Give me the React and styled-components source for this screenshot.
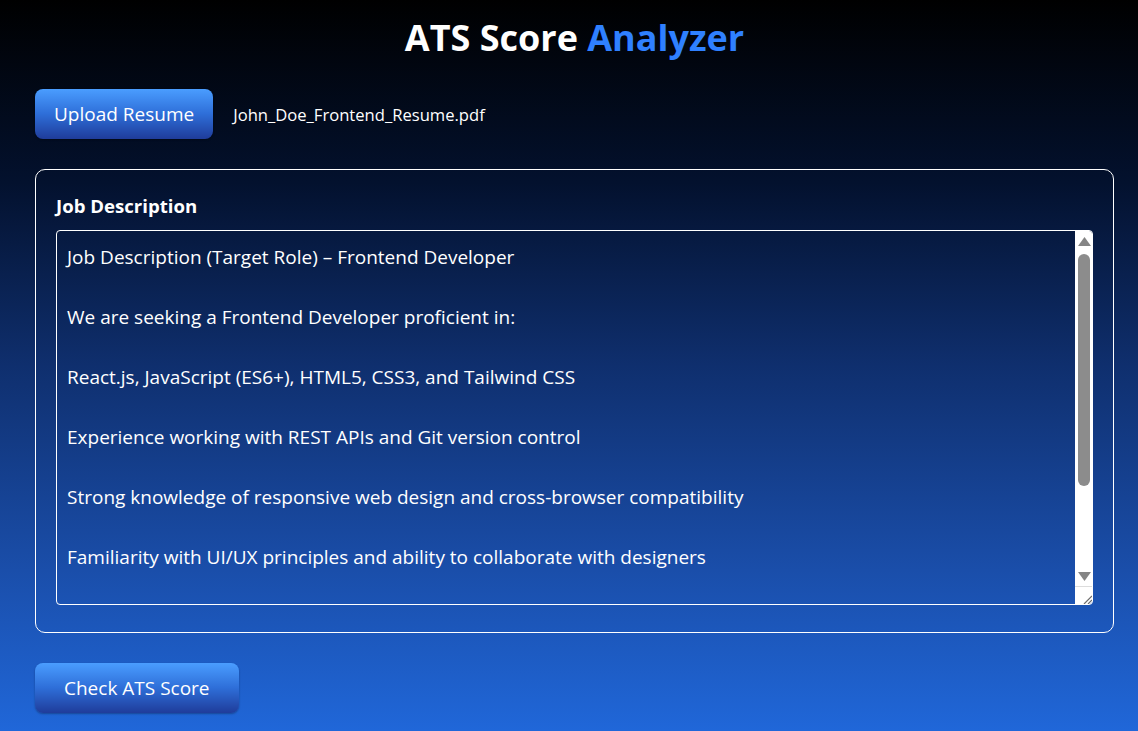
import * as React from "react"
import styled, { createGlobalStyle } from "styled-components"

const GlobalStyle = createGlobalStyle`
  html, body {
    margin: 0;
    padding: 0;
  }
  body {
    min-height: 100vh;
    background: linear-gradient(to bottom, #000000 0%, #03112e 25%, #0f2f6e 50%, #1a4eaa 78%, #2067d9 100%);
    color: #ffffff;
    font-family: "Open Sans", "Noto Sans", sans-serif;
  }
`

const jobText = `Job Description (Target Role) – Frontend Developer

We are seeking a Frontend Developer proficient in:

React.js, JavaScript (ES6+), HTML5, CSS3, and Tailwind CSS

Experience working with REST APIs and Git version control

Strong knowledge of responsive web design and cross-browser compatibility

Familiarity with UI/UX principles and ability to collaborate with designers

Knowledge of testing tools such as Jest and React Testing Library

Good problem-solving and communication skills`

const Page = styled.main`
  min-height: 100vh;
  box-sizing: border-box;
  padding: 15px 24px 18px 35px;
  display: flex;
  flex-direction: column;
`

const Title = styled.h1`
  margin: 0 0 28px;
  text-align: center;
  font-size: 36px;
  font-weight: 700;
  line-height: 46px;
`

const Accent = styled.span`
  color: #2f80ff;
`

const UploadRow = styled.div`
  display: flex;
  align-items: center;
  gap: 20px;
`

const GradientButton = styled.button`
  height: 50px;
  padding: 0 ${(p) => p.$padX || 20}px;
  border: none;
  border-radius: 8px;
  background: linear-gradient(to bottom, #4a9dff 0%, #2e6ed8 50%, #1f3c9a 100%);
  color: #ffffff;
  font-family: inherit;
  font-size: 19px;
  cursor: pointer;
  box-shadow: 0 1px 2px rgba(0, 0, 0, 0.3);
`

const FileName = styled.span`
  font-size: 16.6px;
`

const Card = styled.section`
  margin-top: 30px;
  border: 1px solid #ffffff;
  border-radius: 10px;
  padding: 22px 20px 27px;
  display: flex;
  flex-direction: column;
`

const Label = styled.label`
  font-size: 18.6px;
  font-weight: 700;
  margin: 2px 0 12px;
  line-height: 24px;
`

const Frame = styled.div`
  height: 375px;
  box-sizing: border-box;
  display: flex;
  border: 1px solid #ffffff;
  border-radius: 4px;
  overflow: hidden;
`

const JobArea = styled.textarea`
  flex: 1;
  min-width: 0;
  box-sizing: border-box;
  padding: 11px 10px;
  background: transparent;
  color: #ffffff;
  border: none;
  font-family: inherit;
  font-size: 19px;
  line-height: 30px;
  resize: none;
  outline: none;
  overflow: hidden;
`

const ScrollBar = styled.div`
  width: 18px;
  margin: -1px -1px -1px 0;
  background: #ffffff;
  display: flex;
  flex-direction: column;
`

const ArrowBtn = styled.div`
  height: ${(p) => p.$h}px;
  display: flex;
  align-items: center;
  justify-content: center;
`

const Track = styled.div`
  flex: 1;
  padding: 2px 3px;
`

const Thumb = styled.div`
  width: 12px;
  border-radius: 6px;
  background: #8c8c8c;
`

const Corner = styled.div`
  height: 18px;
  border-top: 1px solid #dcdcdc;
  display: flex;
  align-items: flex-end;
  justify-content: flex-end;
`

const Actions = styled.div`
  margin-top: 30px;
`

const Arrow = ({ up }) => (
  <svg width="13" height="9" viewBox="0 0 13 9">
    <polygon points={up ? "6.5,0 13,9 0,9" : "0,0 13,0 6.5,9"} fill="#858585" />
  </svg>
)

const Grip = () => (
  <svg width="12" height="12" viewBox="0 0 12 12">
    <path d="M3 11 L11 3 M7 11 L11 7" stroke="#6e6e6e" strokeWidth="1.2" fill="none" />
  </svg>
)

export default function App() {
  return (
    <>
      <GlobalStyle />
      <Page>
        <Title>
          ATS Score <Accent>Analyzer</Accent>
        </Title>
        <UploadRow>
          <GradientButton $padX={19}>Upload Resume</GradientButton>
          <FileName>John_Doe_Frontend_Resume.pdf</FileName>
        </UploadRow>
        <Card>
          <Label htmlFor="jd">Job Description</Label>
          <Frame>
            <JobArea id="jd" defaultValue={jobText} />
            <ScrollBar>
              <ArrowBtn $h={22}>
                <Arrow up />
              </ArrowBtn>
              <Track>
                <Thumb style={{ height: 232 }} />
              </Track>
              <ArrowBtn $h={20}>
                <Arrow />
              </ArrowBtn>
              <Corner>
                <Grip />
              </Corner>
            </ScrollBar>
          </Frame>
        </Card>
        <Actions>
          <GradientButton $padX={29}>Check ATS Score</GradientButton>
        </Actions>
      </Page>
    </>
  )
}
